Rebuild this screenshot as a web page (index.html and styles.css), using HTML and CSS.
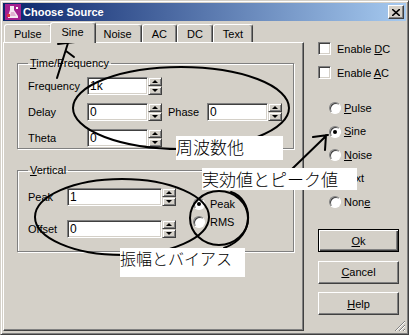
FILE: index.html
```html
<!DOCTYPE html>
<html lang="en">
<head>
    <meta charset="UTF-8" />
    <title>Choose Source</title>
    <link rel="stylesheet" href="styles.css">
</head>
<body>
    <div class="window">
        <div class="titlebar">
            <svg class="app-icon" width="16" height="16" viewBox="0 0 16 16">
                <rect width="16" height="16" fill="#a4208e"/>
                <path d="M5 2h4v4l4 6v2H3v-2l2-6z" fill="#f4e8f0"/>
                <path d="M6 8h3l2 4H5z" fill="#e0b0d0"/>
                <rect x="2" y="10" width="3" height="3" fill="#e03040"/>
                <rect x="11" y="3" width="2" height="2" fill="#fff"/>
            </svg>
            <span class="title">Choose Source</span>
            <div class="close">
                <svg width="8" height="7" viewBox="0 0 8 7"><path d="M0 0L8 7M8 0L0 7" stroke="#000" stroke-width="1.6"/></svg>
            </div>
        </div>
        <div class="content">
            <div class="tab-area">
                <div class="tabstrip">
                    <div class="tab">Pulse</div>
                    <div class="tab selected">Sine</div>
                    <div class="tab">Noise</div>
                    <div class="tab">AC</div>
                    <div class="tab">DC</div>
                    <div class="tab">Text</div>
                </div>
                <div class="panel">
                    <fieldset class="group">
                        <legend><u>T</u>ime/Frequency</legend>
                        <div class="row">
                            <span class="lbl">Frequency</span>
                            <div class="field"><input type="text" value="1k"><div class="spin"><span class="up"></span><span class="down"></span></div></div>
                        </div>
                        <div class="row">
                            <span class="lbl">Delay</span>
                            <div class="field"><input type="text" value="0"><div class="spin"><span class="up"></span><span class="down"></span></div></div>
                            <span class="lbl phase">Phase</span>
                            <div class="field"><input type="text" value="0"><div class="spin"><span class="up"></span><span class="down"></span></div></div>
                        </div>
                        <div class="row">
                            <span class="lbl">Theta</span>
                            <div class="field"><input type="text" value="0"><div class="spin"><span class="up"></span><span class="down"></span></div></div>
                        </div>
                    </fieldset>
                    <fieldset class="group vertical">
                        <legend><u>V</u>ertical</legend>
                        <div class="vrow">
                            <div class="vfields">
                                <div class="row">
                                    <span class="lbl short">Peak</span>
                                    <div class="field"><input class="wide" type="text" value="1"><div class="spin"><span class="up"></span><span class="down"></span></div></div>
                                </div>
                                <div class="row">
                                    <span class="lbl short">Offset</span>
                                    <div class="field"><input class="wide" type="text" value="0"><div class="spin"><span class="up"></span><span class="down"></span></div></div>
                                </div>
                            </div>
                            <div class="radios">
                                <div class="radio"><span class="dot on"></span><span>Peak</span></div>
                                <div class="radio"><span class="dot"></span><span>RMS</span></div>
                            </div>
                        </div>
                    </fieldset>
                </div>
            </div>
            <div class="side">
                <div class="check"><span class="box"></span><span>Enable <u>D</u>C</span></div>
                <div class="check"><span class="box"></span><span>Enable <u>A</u>C</span></div>
                <div class="options">
                    <div class="radio"><span class="dot"></span><span><u>P</u>ulse</span></div>
                    <div class="radio"><span class="dot on"></span><span><u>S</u>ine</span></div>
                    <div class="radio"><span class="dot"></span><span><u>N</u>oise</span></div>
                    <div class="radio"><span class="dot"></span><span><u>T</u>ext</span></div>
                    <div class="radio"><span class="dot"></span><span>Non<u>e</u></span></div>
                </div>
                <div class="buttons">
                    <div class="btn default"><span><u>O</u>k</span></div>
                    <div class="btn"><span><u>C</u>ancel</span></div>
                    <div class="btn"><span><u>H</u>elp</span></div>
                </div>
                <svg class="grip" width="12" height="12" viewBox="0 0 12 12">
                    <path d="M11 1L1 11M11 5L5 11M11 9L9 11" stroke="#808080" stroke-width="1"/>
                    <path d="M11 2L2 11M11 6L6 11M11 10L10 11" stroke="#fff" stroke-width="1"/>
                </svg>
            </div>
        </div>

        <!-- hand-drawn notes on top of the dialog -->
        <svg class="marks" width="409" height="335" viewBox="0 0 409 335">
            <g fill="none" stroke="#000" stroke-width="2" stroke-linecap="round">
                <path d="M58 44L75 42M68 43L57 78M66 51L74 57"/>
                <ellipse cx="181" cy="108" rx="108" ry="41"/>
                <ellipse cx="122" cy="217" rx="87" ry="38"/>
                <ellipse cx="219" cy="218" rx="29" ry="27"/>
                <path d="M231 192C252 198 258 236 224 248"/>
                <path d="M292 169L326 136M313 137L328 135M326 135L325 150"/>
            </g>
        </svg>
        <div class="note note-freq">周波数他</div>
        <div class="note note-peak">実効値とピーク値</div>
        <div class="note note-bias">振幅とバイアス</div>
    </div>
</body>
</html>
```

FILE: styles.css
```css
body {
    margin: 0;
    font-family: "Liberation Sans", Arial, sans-serif;
    font-size: 11px;
    color: #000;
}
.window {
    position: relative;
    width: 409px;
    height: 335px;
    box-sizing: border-box;
    background: #d4d0c8;
    border: 1px solid;
    border-color: #d4d0c8 #404040 #404040 #d4d0c8;
    box-shadow: inset 1px 1px #fff, inset -1px -1px #808080;
    padding: 2px;
    display: flex;
    flex-direction: column;
    overflow: hidden;
}
.titlebar {
    height: 18px;
    flex: none;
    display: flex;
    align-items: center;
    gap: 2px;
    padding: 0 2px;
    background: linear-gradient(to right, #0a246a, #a6caf0);
    color: #fff;
}
.title {
    font-weight: bold;
    font-size: 11px;
}
.close {
    margin-left: auto;
    width: 16px;
    height: 14px;
    box-sizing: border-box;
    background: #d4d0c8;
    border: 1px solid;
    border-color: #fff #404040 #404040 #fff;
    box-shadow: inset -1px -1px #808080;
    display: flex;
    align-items: center;
    justify-content: center;
}
.content {
    flex: 1;
    display: flex;
    min-height: 0;
}
.tab-area {
    width: 301px;
    display: flex;
    flex-direction: column;
}
.tabstrip {
    height: 20px;
    margin-top: 1px;
    display: flex;
    align-items: flex-end;
    padding-left: 1px;
}
.tab {
    height: 18px;
    box-sizing: border-box;
    padding: 0 9px;
    display: flex;
    align-items: center;
    border-top: 1px solid #fff;
    border-left: 1px solid #fff;
    border-right: 1px solid #404040;
    box-shadow: inset -1px 0 #808080;
    border-radius: 3px 3px 0 0;
    background: #d4d0c8;
}
.tab.selected {
    height: 21px;
    margin: 0 -2px -1px;
    padding: 0 11px 2px;
    position: relative;
    z-index: 1;
}
.panel {
    flex: 1;
    margin-bottom: 1px;
    border: 1px solid;
    border-color: #fff #404040 #404040 #fff;
    box-shadow: inset -1px -1px #808080;
    padding: 13px 9px 0 13px;
}
.group {
    margin: 0;
    min-width: 0;
    padding: 7px 10px 1px 10px;
    border: 1px solid #808080;
    box-shadow: 1px 1px #fff, inset 1px 1px #fff;
}
.group legend {
    padding: 0 2px;
    line-height: 14px;
}
.group.vertical {
    margin-top: 14px;
    padding: 11px 10px 13px 10px;
}
.row {
    display: flex;
    align-items: center;
    height: 18px;
}
.row + .row {
    margin-top: 8px;
}
.vertical .row + .row {
    margin-top: 14px;
}
.lbl {
    width: 59px;
    flex: none;
}
.lbl.short {
    width: 39px;
}
.lbl.phase {
    width: 39px;
    margin-left: 6px;
}
.field {
    display: flex;
    height: 18px;
}
.field input {
    width: 61px;
    height: 18px;
    box-sizing: border-box;
    margin: 0;
    padding: 0 2px;
    border: 1px solid;
    border-color: #808080 #fff #fff #808080;
    box-shadow: inset 1px 1px #404040, inset -1px -1px #d4d0c8;
    background: #fff;
    font-family: "Liberation Sans", Arial, sans-serif;
    font-size: 12px;
    color: #000;
    outline: none;
}
.field input.wide {
    width: 95px;
}
.spin {
    width: 14px;
    display: flex;
    flex-direction: column;
}
.spin span {
    flex: 1;
    box-sizing: border-box;
    background: #d4d0c8;
    border: 1px solid;
    border-color: #d4d0c8 #404040 #404040 #d4d0c8;
    box-shadow: inset 1px 1px #fff, inset -1px -1px #808080;
    display: flex;
    align-items: center;
    justify-content: center;
}
.spin .up::before,
.spin .down::before {
    content: "";
    border-left: 3px solid transparent;
    border-right: 3px solid transparent;
}
.spin .up::before {
    border-bottom: 3px solid #000;
}
.spin .down::before {
    border-top: 3px solid #000;
}
.vrow {
    display: flex;
    align-items: center;
}
.radios {
    margin-left: 17px;
    display: flex;
    flex-direction: column;
    gap: 5px;
}
.radio {
    display: flex;
    align-items: center;
    gap: 5px;
    line-height: 13px;
}
.dot {
    width: 12px;
    height: 12px;
    flex: none;
    box-sizing: border-box;
    border-radius: 50%;
    background: #fff;
    border: 1px solid;
    border-color: #808080 #fff #fff #808080;
    box-shadow: inset 1px 1px #404040;
    display: flex;
    align-items: center;
    justify-content: center;
}
.dot.on::after {
    content: "";
    width: 4px;
    height: 4px;
    border-radius: 50%;
    background: #000;
}
.side {
    flex: 1;
    padding: 21px 0 0 14px;
    display: flex;
    flex-direction: column;
}
.check {
    display: flex;
    align-items: center;
    gap: 6px;
    height: 13px;
}
.check + .check {
    margin-top: 11px;
}
.box {
    width: 13px;
    height: 13px;
    flex: none;
    box-sizing: border-box;
    background: #fff;
    border: 1px solid;
    border-color: #808080 #fff #fff #808080;
    box-shadow: inset 1px 1px #404040, inset -1px -1px #d4d0c8;
}
.options {
    margin-top: 21px;
    padding-left: 11px;
    display: flex;
    flex-direction: column;
    gap: 7.5px;
}
.options .radio {
    height: 16px;
    gap: 3px;
}
.buttons {
    margin-top: 19px;
    display: flex;
    flex-direction: column;
    gap: 8.5px;
}
.btn {
    width: 81px;
    height: 23px;
    box-sizing: border-box;
    background: #d4d0c8;
    border: 1px solid;
    border-color: #fff #404040 #404040 #fff;
    box-shadow: inset -1px -1px #808080;
    display: flex;
    align-items: center;
    justify-content: center;
}
.btn.default {
    border-color: #000;
    box-shadow: inset 1px 1px #fff, inset -1px -1px #404040, inset -2px -2px #808080;
}
.grip {
    margin-top: auto;
    align-self: flex-end;
}
.marks {
    position: absolute;
    left: -1px;
    top: -1px;
    pointer-events: none;
}
.note {
    position: absolute;
    background: #fff;
    font-family: "Noto Sans CJK JP", sans-serif;
    font-size: 17px;
    font-weight: 300;
    line-height: 21px;
    white-space: nowrap;
}
.note-freq {
    left: 175px;
    top: 135px;
    width: 107px;
    height: 24px;
}
.note-peak {
    left: 201px;
    top: 167px;
    width: 155px;
    height: 22px;
}
.note-bias {
    left: 119px;
    top: 247px;
    width: 125px;
    height: 29px;
    font-size: 16px;
}
```
